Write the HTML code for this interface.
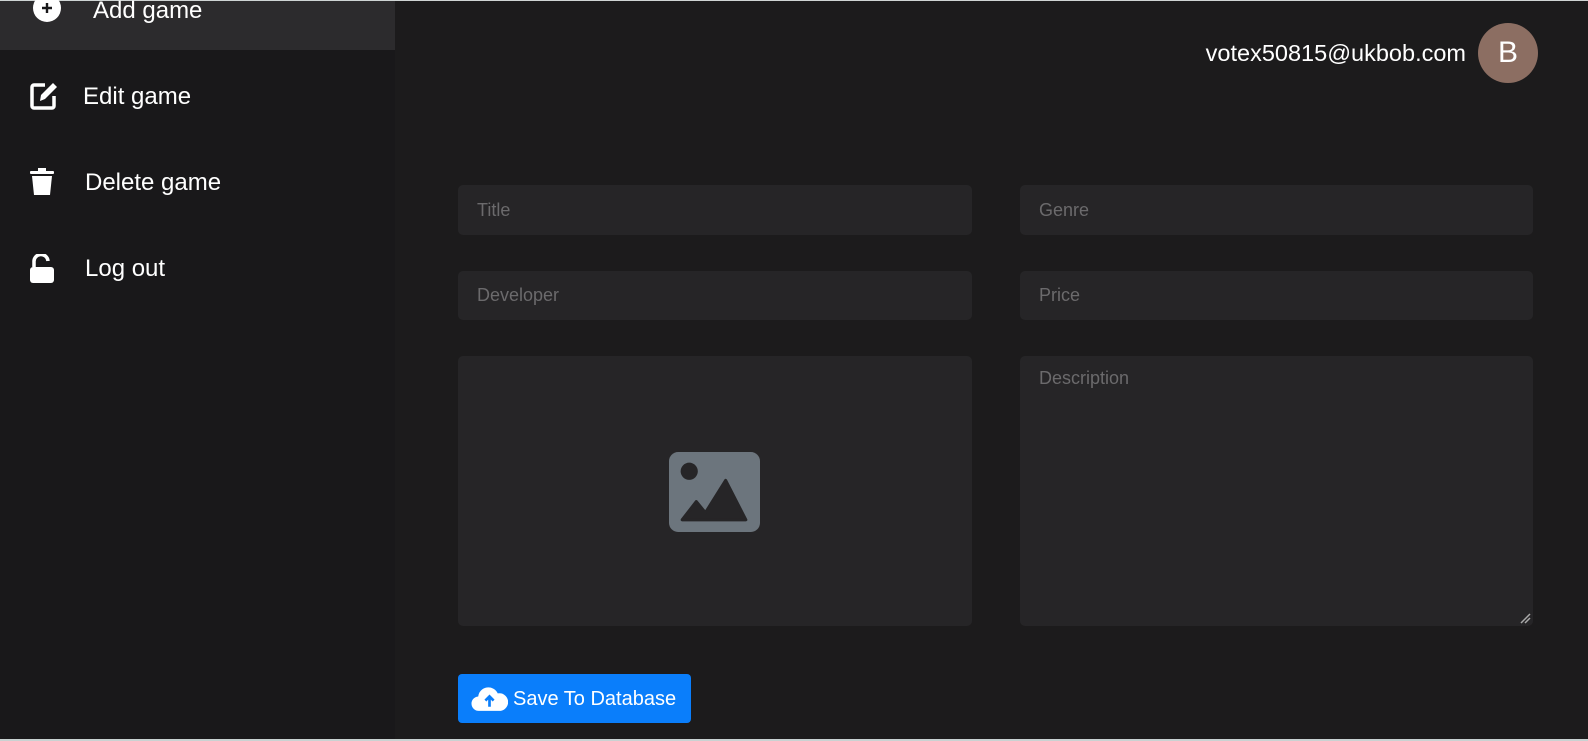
<!DOCTYPE html>
<html><head><style>
*{box-sizing:border-box;margin:0;padding:0}
body{width:1588px;height:741px;overflow:hidden;background:#1c1b1c;font-family:"Liberation Sans",Arial,sans-serif;position:relative}
.top{position:absolute;left:0;top:0;width:1588px;height:1px;background:#cfd4d4}
.bot{position:absolute;left:0;top:739px;width:1588px;height:2px;background:#c9d2d2}
.side{position:absolute;left:0;top:1px;width:395px;height:740px;background:#19181a}
.active{position:absolute;left:0;top:0;width:395px;height:49px;background:#2c2b2d}
.item{position:absolute;color:#fff;font-size:24px}
.user{position:absolute;right:122px;top:40px;color:#fff;font-size:23.5px}
.av{position:absolute;left:1478px;top:23px;width:60px;height:60px;border-radius:50%;background:#8c6e62;color:#fff;font-size:30px;text-align:center;line-height:60px}
.in{position:absolute;background:#262527;border-radius:5px;color:#6b6a6c;font-size:18px;padding-left:19px}
.btn{position:absolute;left:458px;top:674px;width:233px;height:49px;background:#0a7efb;border-radius:4px;color:#fff;font-size:20px;line-height:51px;padding-left:55px}
</style></head><body>
<div class="top"></div>
<div class="side">
 <div class="active"></div>
 <div class="item" style="left:93px;top:-4px">Add game</div>
 <svg style="position:absolute;left:33px;top:-1px" width="28" height="22" viewBox="0 0 28 22"><circle cx="14" cy="8" r="14" fill="#fff"/><path d="M14 3v10M9 8h10" stroke="#19181a" stroke-width="2.4"/></svg>
 <div class="item" style="left:83px;top:82px">Edit game</div>
 <svg style="position:absolute;left:29px;top:79px" width="30" height="31" viewBox="0 0 30 31"><path d="M16 5H5a2 2 0 0 0-2 2v19a2 2 0 0 0 2 2h18a2 2 0 0 0 2-2V16" fill="none" stroke="#fff" stroke-width="3.5" stroke-linejoin="round"/><path d="M11 21l1-6L24 3l4 4L16 19z" fill="#fff"/></svg>
 <div class="item" style="left:85px;top:168px">Delete game</div>
 <svg style="position:absolute;left:29px;top:167px" width="26" height="28" viewBox="0 0 26 28"><rect x="1" y="3" width="24" height="3" rx="1" fill="#fff"/><rect x="9" y="0" width="8" height="4" fill="#fff"/><path d="M3 8h20l-2 19H5z" fill="#fff"/></svg>
 <div class="item" style="left:85px;top:254px">Log out</div>
 <svg style="position:absolute;left:29px;top:253px" width="26" height="30" viewBox="0 0 26 30"><path d="M5 13V8a7 7 0 0 1 14-1" fill="none" stroke="#fff" stroke-width="3.5"/><rect x="1" y="13" width="24" height="16" rx="3" fill="#fff"/></svg>
</div>
<div class="user">votex50815@ukbob.com</div>
<div class="av">B</div>
<div class="in" style="left:458px;top:185px;width:514px;height:50px;line-height:50px">Title</div>
<div class="in" style="left:1020px;top:185px;width:513px;height:50px;line-height:50px">Genre</div>
<div class="in" style="left:458px;top:271px;width:514px;height:49px;line-height:49px">Developer</div>
<div class="in" style="left:1020px;top:271px;width:513px;height:49px;line-height:49px">Price</div>
<div class="in" style="left:458px;top:356px;width:514px;height:270px"></div>
<svg style="position:absolute;left:669px;top:452px" width="91" height="80" viewBox="0 0 90 79"><rect width="90" height="79" rx="9" fill="#6c757d"/><circle cx="20" cy="19" r="8.5" fill="#262527"/><path d="M13 67L27 49l9 11 20-32 20 39z" fill="#262527" stroke="#262527" stroke-width="3" stroke-linejoin="round"/></svg>
<div class="in" style="left:1020px;top:356px;width:513px;height:270px;padding-top:12px">Description</div>
<svg style="position:absolute;left:1519px;top:612px" width="12" height="12"><path d="M2 11L11 2M6 11l5-5" stroke="#aaa" stroke-width="1.5"/></svg>
<div class="btn"><svg style="position:absolute;left:13px;top:10px" width="37" height="29" viewBox="0 0 36 28"><path d="M8 26a7 7 0 0 1-1-14 10 10 0 0 1 19-3 8 8 0 0 1 3 17z" fill="#fff"/><path d="M18 22V12M14 16l4-4 4 4" stroke="#0a7efb" stroke-width="2.6" fill="none"/></svg>Save To Database</div>
<div class="bot"></div>
</body></html>
